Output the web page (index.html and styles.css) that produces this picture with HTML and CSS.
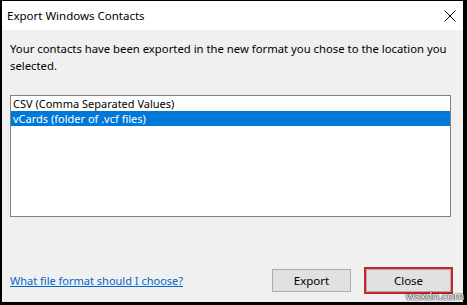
FILE: index.html
```html
<!DOCTYPE html>
<html lang="en">
<head>
    <meta charset="UTF-8">
    <title>Export Windows Contacts</title>
    <link rel="stylesheet" href="styles.css">
</head>
<body>
    <div class="window">
        <div class="titlebar">
            <span class="title">Export Windows Contacts</span>
            <svg class="close-x" width="12" height="12" viewBox="0 0 12 12">
                <path d="M0.5 0.5 L11.5 11.5 M11.5 0.5 L0.5 11.5" stroke="#000" stroke-width="1" fill="none"/>
            </svg>
        </div>
        <div class="content">
            <p class="message">Your contacts have been exported in the new format you chose to the location you selected.</p>
            <ul class="listbox">
                <li>CSV (Comma Separated Values)</li>
                <li class="selected">vCards (folder of .vcf files)</li>
            </ul>
            <div class="footer">
                <a href="#" class="help-link">What file format should I choose?</a>
                <div class="buttons">
                    <button class="btn btn-export">Export</button>
                    <button class="btn btn-close">Close</button>
                </div>
            </div>
        </div>
    </div>
    <span class="watermark">wsxdn.com</span>
</body>
</html>
```

FILE: styles.css
```css
body {
    margin: 0;
    padding: 0;
    background: #000;
    font-family: "Noto Sans", "Open Sans", sans-serif;
    font-size: 11px;
    color: #000;
    width: 467px;
    height: 305px;
    overflow: hidden;
}

.window {
    width: 461px;
    height: 301px;
    margin: 1px 0 0 2px;
    background: #f0f0f0;
    display: flex;
    flex-direction: column;
}

.titlebar {
    height: 29px;
    background: #fff;
    display: flex;
    align-items: center;
    justify-content: space-between;
    padding: 0 7px 0 5px;
}

.title {
    font-size: 11.5px;
}

.content {
    flex: 1;
    display: flex;
    flex-direction: column;
    padding: 10px 12px 0 8px;
}

.message {
    margin: 0;
    line-height: 17px;
    width: 445px;
    font-size: 11.3px;
}

.listbox {
    list-style: none;
    margin: 21px 0 0 0;
    padding: 0;
    width: 439px;
    height: 120px;
    background: #fff;
    border: 1px solid #828282;
}

.listbox li {
    height: 15px;
    line-height: 15px;
    padding-left: 2px;
}

.listbox li.selected {
    background: #0078d7;
    color: #fff;
}

.footer {
    display: flex;
    justify-content: space-between;
    align-items: center;
    margin-top: 52px;
}

.help-link {
    color: #0066cc;
    text-decoration: underline;
}

.buttons {
    display: flex;
    align-items: center;
    gap: 15px;
}

.btn {
    font-family: "Noto Sans", "Open Sans", sans-serif;
    font-size: 11.5px;
    height: 23px;
    padding: 0;
    background: #e1e1e1;
    border: 1px solid #adadad;
    color: #000;
}

.btn-export {
    width: 79px;
}

.btn-close {
    width: 85px;
    outline: 2px solid #d4202a;
    outline-offset: 0;
}

.watermark {
    position: absolute;
    left: 406px;
    top: 288px;
    font-size: 11px;
    color: #fff;
    text-shadow: 0 0 2px #000, 0 0 1px #000;
}
```
